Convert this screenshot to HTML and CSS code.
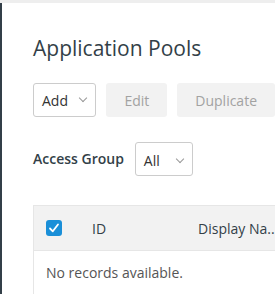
FILE: index.html
```html
<!DOCTYPE html>
<html lang="en">
<head>
    <meta charset="UTF-8">
    <meta name="viewport" content="width=device-width, initial-scale=1.0">
    <title>Application Pools</title>
    <link rel="stylesheet" href="styles.css">
</head>
<body>
    <div class="topbar"></div>
    <div class="page">
        <h1>Application Pools</h1>

        <div class="toolbar">
            <button class="select">Add <span class="caret"></span></button>
            <button class="btn" disabled>Edit</button>
            <button class="btn" disabled>Duplicate</button>
        </div>

        <div class="filter">
            <label>Access Group</label>
            <button class="select small">All <span class="caret"></span></button>
        </div>

        <div class="grid">
            <div class="grid-head">
                <span class="check">
                    <svg width="12" height="12" viewBox="0 0 12 12"><path d="M2 6.5 L4.8 9.3 L10 2.5" fill="none" stroke="#fff" stroke-width="1.8" stroke-linecap="round" stroke-linejoin="round"/></svg>
                </span>
                <span class="col-id">ID</span>
                <span class="col-name">Display Na...</span>
            </div>
            <div class="grid-empty">No records available.</div>
        </div>
    </div>
</body>
</html>
```

FILE: styles.css
```css
body {
    margin: 0;
    font-family: 'Open Sans', sans-serif;
    color: #333f48;
    background: #fff;
    overflow: hidden;
}

.topbar {
    height: 3px;
    background: #eeeeee;
}

.page {
    border-left: 2px solid #333f48;
    padding: 0 0 0 31px;
    height: 291px;
}

h1 {
    margin: 0;
    padding-top: 31px;
    font-size: 21px;
    font-weight: 400;
    line-height: 28px;
    white-space: nowrap;
}

.toolbar {
    display: flex;
    gap: 10px;
    margin-top: 21px;
    white-space: nowrap;
}

button {
    font-family: inherit;
    font-size: 14px;
    height: 34px;
    border-radius: 3px;
    padding: 0;
}

.select {
    display: flex;
    align-items: center;
    justify-content: space-between;
    width: 65px;
    padding: 0 9px 0 8px;
    background: #fff;
    border: 1px solid #cccccc;
    color: #333;
}

.select.small {
    width: 58px;
    padding-top: 3px;
}

.caret {
    width: 5px;
    height: 5px;
    border-right: 1px solid #999;
    border-bottom: 1px solid #999;
    transform: rotate(45deg);
    margin-top: -4px;
}

.btn {
    background: #f2f2f2;
    border: none;
    color: #a2a2a2;
    padding: 0 18px;
}

.btn:first-of-type {
    width: 58px;
}

.filter {
    display: flex;
    align-items: center;
    gap: 11px;
    margin-top: 25px;
}

.filter label {
    font-size: 14px;
    font-weight: 600;
    margin-top: -2px;
}

.grid {
    margin-top: 29px;
    border: 1px solid #e6e6e6;
    border-right: none;
    width: 241px;
}

.grid-head {
    display: flex;
    align-items: center;
    height: 44px;
    background: #f2f2f2;
    border-bottom: 1px solid #e6e6e6;
    font-size: 14px;
    white-space: nowrap;
    overflow: hidden;
}

.check {
    display: flex;
    align-items: center;
    justify-content: center;
    flex-shrink: 0;
    width: 16px;
    height: 16px;
    margin-left: 12px;
    background: #1a8fd8;
    border-radius: 3px;
}

.col-id {
    margin-left: 30px;
}

.col-name {
    margin-left: 92px;
}

.grid-empty {
    padding: 12px 12px;
    font-size: 14px;
    color: #555;
}
```
